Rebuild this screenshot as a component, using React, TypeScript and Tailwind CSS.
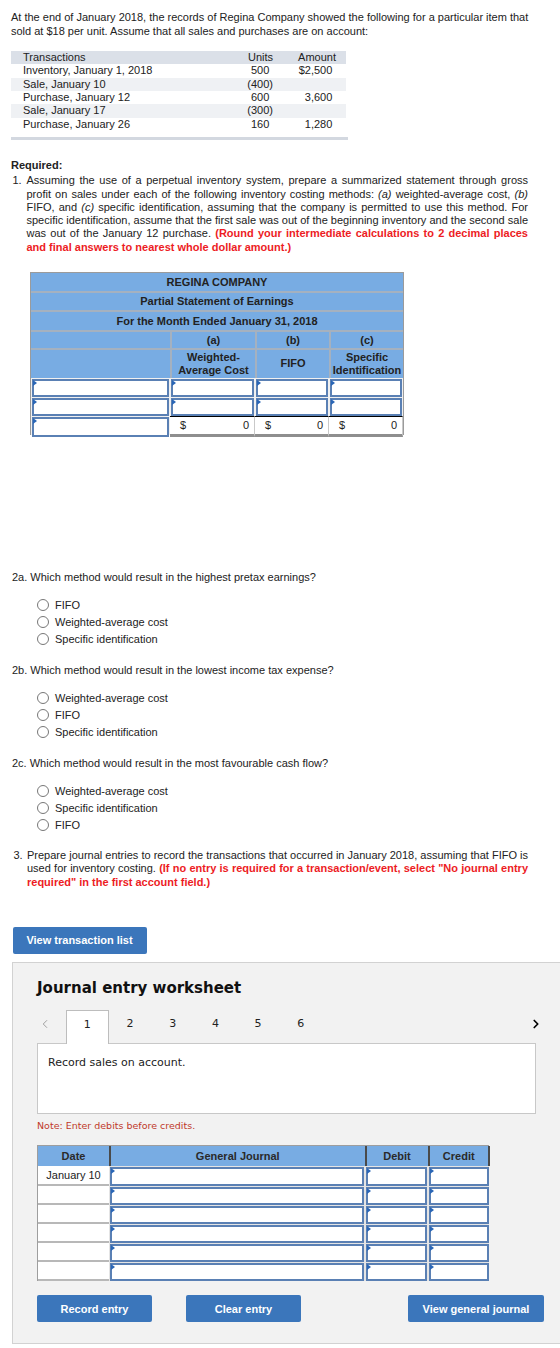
import React from 'react';
import { ChevronLeft, ChevronRight } from 'lucide-react';

const transactions = [
  { label: 'Inventory, January 1, 2018', units: '500', amount: '$2,500' },
  { label: 'Sale, January 10', units: '(400)', amount: '' },
  { label: 'Purchase, January 12', units: '600', amount: '3,600' },
  { label: 'Sale, January 17', units: '(300)', amount: '' },
  { label: 'Purchase, January 26', units: '160', amount: '1,280' },
];

const questions = [
  {
    label: '2a. Which method would result in the highest pretax earnings?',
    options: ['FIFO', 'Weighted-average cost', 'Specific identification'],
  },
  {
    label: '2b. Which method would result in the lowest income tax expense?',
    options: ['Weighted-average cost', 'FIFO', 'Specific identification'],
  },
  {
    label: '2c. Which method would result in the most favourable cash flow?',
    options: ['Weighted-average cost', 'Specific identification', 'FIFO'],
  },
];

// numbers line up on the digit, so a closing paren hangs past the column edge
const Num = ({ value }: { value: string }) =>
  value.endsWith(')') ? <>{value}</> : <>{value}<span className="invisible">)</span></>;

const Field = () => (
  <div className="relative h-full bg-white border-2 border-[#5a80b4]">
    <span className="absolute left-[-1px] top-[-1px] w-0 h-0 border-t-[3px] border-b-[3px] border-t-transparent border-b-transparent border-l-[4px] border-l-[#2a66b6]" />
  </div>
);

const BlueButton = ({ label, width }: { label: string; width: string }) => (
  <button
    type="button"
    className={`${width} h-[27px] rounded-[2px] bg-[#3b76bb] text-white font-bold text-[11px] font-['Liberation_Sans',Arial,sans-serif]`}
  >
    {label}
  </button>
);

const App: React.FC = () => {
  return (
    <div className="w-[560px] min-h-[1348px] bg-white text-[11px] text-[#222] font-['Liberation_Sans',Arial,sans-serif]">
      <p className="pt-[10px] pl-[11px] w-[540px] leading-[14px]">
        At the end of January 2018, the records of Regina Company showed the following for a particular item that
        <br />
        sold at $18 per unit. Assume that all sales and purchases are on account:
      </p>

      {/* transactions */}
      <div className="ml-[11px] mt-[13px] w-[335px] leading-[13.33px]">
        <div className="flex h-[13.33px] bg-[#dbe0e8]">
          <div className="flex-1 pl-[12px]">Transactions</div>
          <div className="w-[60px] text-right">Units</div>
          <div className="w-[63px] text-right">Amount</div>
          <div className="w-[10px]" />
        </div>
        {transactions.map((t, i) => (
          <div key={t.label} className={`flex h-[13.33px] ${i % 2 === 1 ? 'bg-[#eff1f4]' : 'bg-white'}`}>
            <div className="flex-1 pl-[12px]">{t.label}</div>
            <div className="w-[60px] text-right"><Num value={t.units} /></div>
            <div className="w-[63px] text-right">{t.amount && <Num value={t.amount} />}</div>
            <div className="w-[10px]" />
          </div>
        ))}
      </div>
      <div className="ml-[11px] mt-[6px] w-[337px] h-[3px] bg-[#d3d8e0]" />

      <div className="mt-[19px] pl-[11px] font-bold leading-[13.3px]">Required:</div>
      <div className="mt-[2px] flex leading-[13.3px]">
        <div className="w-[26.5px] shrink-0 pl-[12.5px]">1.</div>
        <p className="w-[501.5px] text-justify">
          Assuming the use of a perpetual inventory system, prepare a summarized statement through gross profit on
          sales under each of the following inventory costing methods: <i>(a)</i> weighted-average cost, <i>(b)</i>{' '}
          FIFO, and <i>(c)</i> specific identification, assuming that the company is permitted to use this method. For
          specific identification, assume that the first sale was out of the beginning inventory and the second sale
          was out of the January 12 purchase.{' '}
          <b className="text-[#ed1c24]">
            (Round your intermediate calculations to 2 decimal places and final answers to nearest whole dollar
            amount.)
          </b>
        </p>
      </div>

      {/* statement of earnings */}
      <div className="ml-[30px] mt-[18px] w-[374px] border-x border-t border-[#9b9b9b] text-[#222]">
        <div className="font-bold">
          <div className="h-[19.5px] flex items-center justify-center bg-[#78ace3] border-b-2 border-[#a5b1bf]">
            REGINA COMPANY
          </div>
          <div className="h-[19.5px] flex items-center justify-center bg-[#78ace3] border-b-2 border-[#a5b1bf]">
            Partial Statement of Earnings
          </div>
          <div className="h-[19.5px] flex items-center justify-center bg-[#78ace3] border-b-2 border-[#a5b1bf]">
            For the Month Ended January 31, 2018
          </div>
          <div className="grid grid-cols-[139px_85px_74px_74px] h-[18.5px] bg-[#78ace3] border-b-2 border-[#a5b1bf]">
            <div />
            <div className="flex items-center justify-center border-l-2 border-[#a5b1bf]">(a)</div>
            <div className="flex items-center justify-center border-l-2 border-[#a5b1bf]">(b)</div>
            <div className="flex items-center justify-center border-l-2 border-[#a5b1bf]">(c)</div>
          </div>
          <div className="grid grid-cols-[139px_85px_74px_74px] h-[28px] bg-[#78ace3] leading-[13.5px] text-center">
            <div />
            <div className="flex items-center justify-center border-l-2 border-[#a5b1bf]">
              Weighted-
              <br />
              Average Cost
            </div>
            <div className="flex items-center justify-center border-l-2 border-[#a5b1bf]">FIFO</div>
            <div className="flex items-center justify-center border-l-2 border-[#a5b1bf]">
              Specific
              <br />
              Identification
            </div>
          </div>
        </div>
        {[0, 1].map((r) => (
          <div key={r} className="grid grid-cols-[139px_85px_74px_74px] h-[19px] bg-[#f0f0f0]">
            {[0, 1, 2, 3].map((c) => (
              <div key={c} className="p-[1px] pb-0">
                <Field />
              </div>
            ))}
          </div>
        ))}
        <div className="grid grid-cols-[139px_85px_74px_74px] h-[19px] bg-[#f0f0f0]">
          <div className="p-[1px] pb-0">
            <Field />
          </div>
          {[0, 1, 2].map((c) => (
            <div
              key={c}
              className="flex items-center justify-between bg-white border-t border-black border-b-[3px] border-b-[#8e8e8e] border-r border-r-[#c9c9c9] pl-[10px] pr-[5px]"
            >
              <span>$</span>
              <span>0</span>
            </div>
          ))}
        </div>
      </div>

      {/* multiple choice */}
      <div className="mt-[134.5px]">
        {questions.map((q) => (
          <div key={q.label} className="mb-[15px]">
            <div className="pl-[12px] leading-[14px]">{q.label}</div>
            <div className="mt-[13px]">
              {q.options.map((o) => (
                <label key={o} className="flex items-center h-[17px] pl-[37px]">
                  <span className="w-[12px] h-[12px] rounded-full border border-[#777] bg-white shrink-0" />
                  <span className="ml-[6px]">{o}</span>
                </label>
              ))}
            </div>
          </div>
        ))}
      </div>

      <div className="flex leading-[13.7px]">
        <div className="w-[27px] shrink-0 pl-[13.5px]">3.</div>
        <p className="w-[501px] text-justify">
          Prepare journal entries to record the transactions that occurred in January 2018, assuming that FIFO is used
          for inventory costing.{' '}
          <b className="text-[#ed1c24]">
            (If no entry is required for a transaction/event, select "No journal entry required" in the first account
            field.)
          </b>
        </p>
      </div>

      <div className="mt-[37px] ml-[12.5px]">
        <BlueButton label="View transaction list" width="w-[134px]" />
      </div>

      {/* journal entry worksheet */}
      <div className="mt-[8px] ml-[12px] border border-r-0 border-[#d2d2d2] bg-[#f2f2f2] pl-[24px] pt-[16px] pb-[20.5px] font-['DejaVu_Sans',Verdana,sans-serif]">
        <h2 className="text-[15px] leading-[18px] font-bold text-[#111]">Journal entry worksheet</h2>

        <div className="mt-[13px] flex items-start w-[506px] h-[33px] text-[11px]">
          <div className="w-[29px] h-[33px] flex items-start pt-[7px] pl-[1px]">
            <ChevronLeft size={14} strokeWidth={1.6} className="text-[#9a9a9a]" />
          </div>
          {[1, 2, 3, 4, 5, 6].map((n) => (
            <div
              key={n}
              className={`w-[42.7px] h-[34px] pt-[7px] leading-[14px] text-center text-[#222] ${
                n === 1 ? 'bg-white border-x border-t border-[#bdbdbd] relative z-10' : ''
              }`}
            >
              {n}
            </div>
          ))}
          <div className="ml-auto pt-[7px]">
            <ChevronRight size={14} strokeWidth={3} className="text-black" />
          </div>
        </div>

        <div className="w-[498.5px] h-[71px] bg-white border border-[#c8c8c8] pl-[10px] pt-[12.5px] text-[11px] leading-[14px] text-[#222]">
          Record sales on account.
        </div>

        <div className="mt-[6.5px] text-[9.5px] leading-[12px] text-[#c0392b]">Note: Enter debits before credits.</div>

        {/* journal grid */}
        <div className="mt-[12.5px] w-[452px] border-t border-l border-[#9e9e9e] font-['Liberation_Sans',Arial,sans-serif]">
          <div className="grid grid-cols-[71px_255.5px_63px_62.5px] h-[20.7px] bg-[#78ace3] font-bold text-[#2a2a2a]">
            <div className="flex items-center justify-center">Date</div>
            <div className="flex items-center justify-center border-l-2 border-[#4a4a4a]">General Journal</div>
            <div className="flex items-center justify-center border-l-2 border-[#4a4a4a]">Debit</div>
            <div className="flex items-center justify-center border-l-2 border-[#4a4a4a] border-r-2">Credit</div>
          </div>
          {[0, 1, 2, 3, 4, 5].map((r) => (
            <div key={r} className="grid grid-cols-[71px_255.5px_63px_62.5px] h-[19.2px] bg-[#e4e4e4]">
              <div className="flex items-center justify-center bg-white border-b-2 border-[#b8b8b8]">
                {r === 0 ? 'January 10' : ''}
              </div>
              {[0, 1, 2].map((c) => (
                <div key={c} className="p-[1px] pb-0">
                  <Field />
                </div>
              ))}
            </div>
          ))}
        </div>

        <div className="mt-[14px] flex w-[507px]">
          <BlueButton label="Record entry" width="w-[115px]" />
          <div className="ml-[34px]">
            <BlueButton label="Clear entry" width="w-[115px]" />
          </div>
          <div className="ml-auto">
            <BlueButton label="View general journal" width="w-[136px]" />
          </div>
        </div>
      </div>
    </div>
  );
};

export default App;
